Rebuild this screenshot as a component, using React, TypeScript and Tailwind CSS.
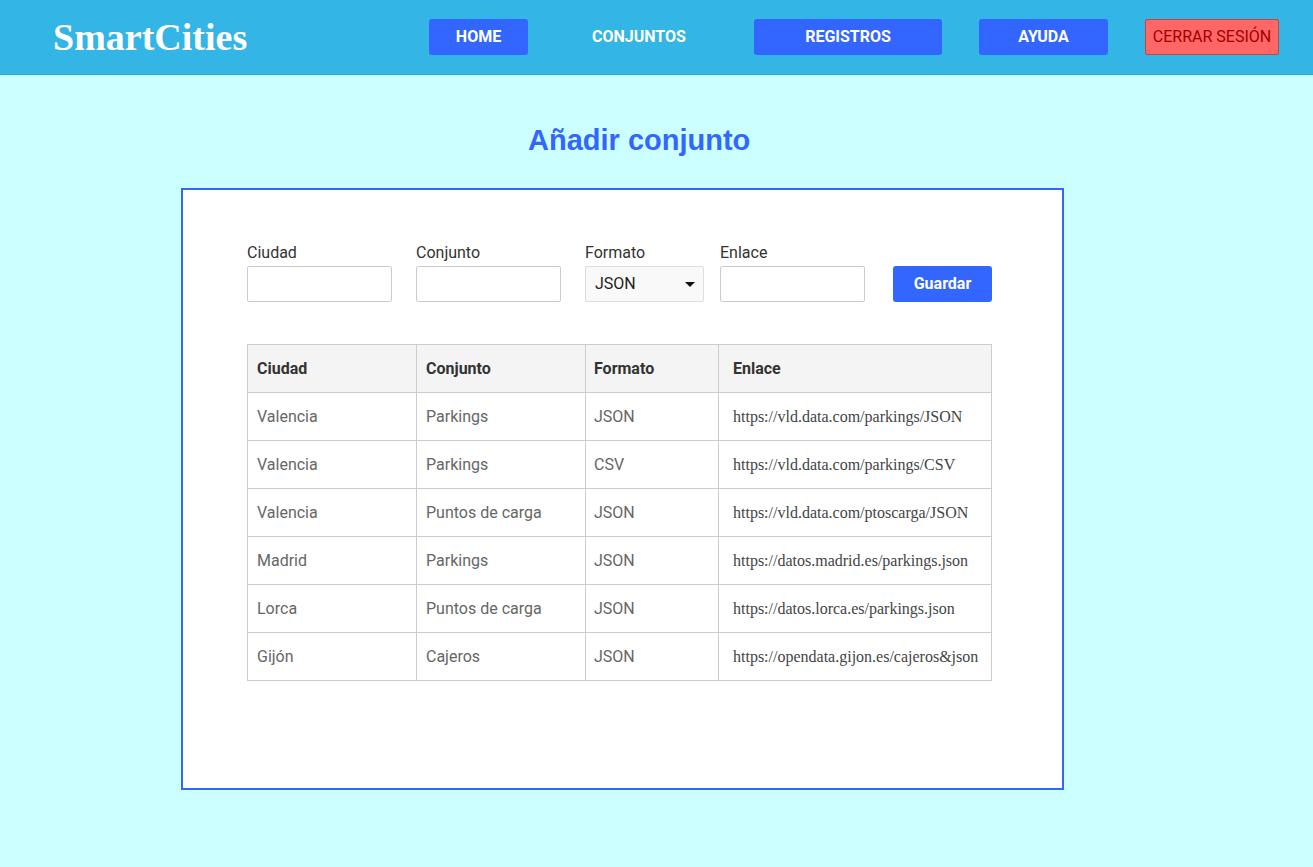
const rows = [
  { ciudad: "Valencia", conjunto: "Parkings", formato: "JSON", enlace: "https://vld.data.com/parkings/JSON" },
  { ciudad: "Valencia", conjunto: "Parkings", formato: "CSV", enlace: "https://vld.data.com/parkings/CSV" },
  { ciudad: "Valencia", conjunto: "Puntos de carga", formato: "JSON", enlace: "https://vld.data.com/ptoscarga/JSON" },
  { ciudad: "Madrid", conjunto: "Parkings", formato: "JSON", enlace: "https://datos.madrid.es/parkings.json" },
  { ciudad: "Lorca", conjunto: "Puntos de carga", formato: "JSON", enlace: "https://datos.lorca.es/parkings.json" },
  { ciudad: "Gijón", conjunto: "Cajeros", formato: "JSON", enlace: "https://opendata.gijon.es/cajeros&json" },
];

function Field({ label, width }: { label: string; width: string }) {
  return (
    <div className="flex flex-col">
      <label className="mb-[4px] text-[16px] leading-[19px] text-[#333]">{label}</label>
      <input className={`h-[36px] ${width} rounded-[2px] border border-[#ccc] bg-white px-2`} />
    </div>
  );
}

export default function App() {
  return (
    <div className="min-h-[867px] bg-[#ccffff] font-['Roboto',sans-serif]">
      <header className="flex h-[75px] items-center border-b border-[#2fa8d5] bg-[#33b5e5]">
        <div className="ml-[53px] w-[376px] font-['Liberation_Serif',serif] text-[38px] font-bold leading-none text-white">
          SmartCities
        </div>
        <nav className="flex items-center text-[16px] font-bold uppercase text-white">
          <a className="flex h-[36px] w-[99px] items-center justify-center rounded-[3px] bg-[#3366ff]">Home</a>
          <a className="mr-[4px] flex h-[36px] w-[222px] items-center justify-center">Conjuntos</a>
          <a className="flex h-[36px] w-[188px] items-center justify-center rounded-[3px] bg-[#3366ff]">Registros</a>
          <a className="ml-[37px] flex h-[36px] w-[129px] items-center justify-center rounded-[3px] bg-[#3366ff]">Ayuda</a>
          <a className="ml-[37px] flex h-[36px] w-[134px] items-center justify-center rounded-[2px] border border-[#c04545] bg-[#ff6666] font-normal text-[#a00000]">
            Cerrar sesión
          </a>
        </nav>
      </header>

      <h1 className="mt-[49px] pl-[528px] font-['Liberation_Sans',sans-serif] text-[29px] font-bold leading-[32px] text-[#3366ff]">
        Añadir conjunto
      </h1>

      <div className="ml-[181px] mt-[32px] h-[602px] w-[883px] border-2 border-[#3366ff] bg-white pl-[64px] pt-[53px]">
        <div className="flex items-end">
          <Field label="Ciudad" width="w-[145px]" />
          <div className="ml-[24px]">
            <Field label="Conjunto" width="w-[145px]" />
          </div>
          <div className="ml-[24px] flex flex-col">
            <label className="mb-[4px] text-[16px] leading-[19px] text-[#333]">Formato</label>
            <div className="flex h-[36px] w-[119px] items-center justify-between rounded-[2px] border border-[#ddd] bg-[#f9f9f9] pl-[9px] pr-[8px] text-[16px] text-[#222]">
              <span>JSON</span>
              <svg width="10" height="5" viewBox="0 0 10 5"><path d="M0 0h10L5 5z" fill="#111" /></svg>
            </div>
          </div>
          <div className="ml-[16px]">
            <Field label="Enlace" width="w-[145px]" />
          </div>
          <button className="ml-[28px] h-[36px] w-[99px] rounded-[3px] bg-[#3366ff] text-[16px] font-bold text-white">
            Guardar
          </button>
        </div>

        <table className="mt-[42px] w-[745px] border-collapse text-[16px]">
          <thead>
            <tr className="h-[48px] bg-[#f4f4f4] text-left text-[#333]">
              <th className="w-[169px] border border-[#ccc] pl-[9px] font-bold">Ciudad</th>
              <th className="w-[169px] border border-[#ccc] pl-[9px] font-bold">Conjunto</th>
              <th className="w-[133px] border border-[#ccc] pl-[8px] font-bold">Formato</th>
              <th className="border border-[#ccc] pl-[14px] font-bold">Enlace</th>
            </tr>
          </thead>
          <tbody>
            {rows.map((r, i) => (
              <tr key={i} className="h-[48px] text-[#666]">
                <td className="border border-[#ccc] pl-[9px]">{r.ciudad}</td>
                <td className="border border-[#ccc] pl-[9px]">{r.conjunto}</td>
                <td className="border border-[#ccc] pl-[8px]">{r.formato}</td>
                <td className="border border-[#ccc] pl-[14px] font-['Liberation_Serif',serif] text-[16px] text-[#444]">
                  {r.enlace}
                </td>
              </tr>
            ))}
          </tbody>
        </table>
      </div>
    </div>
  );
}
